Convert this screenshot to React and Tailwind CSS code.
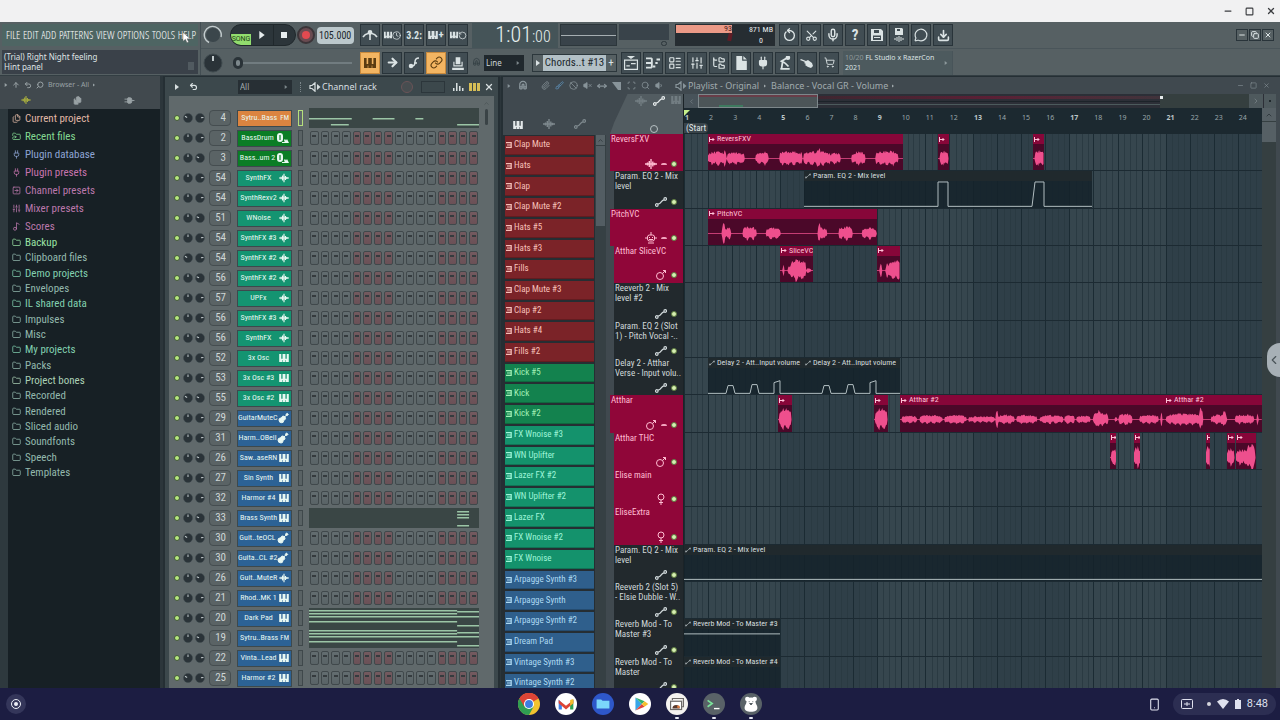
import React from 'react'
import {
  Guitar, Magnet, Mic, Scissors, RotateCcw, Search, Link, MessageCircle, Download, FolderTree,
  Files, Plug, ShoppingCart, VolumeX, Volume1, SlidersVertical, Paperclip, Brush, Ban,
  MoveHorizontal, Scan, Music2, Folder, FolderSymlink, Undo2, ArrowUp, ArrowRight, X, Smartphone,
  Clock, ChevronUp, ChevronRight, ChevronLeft, LayoutList, SquareArrowRight, Hand, Minus, Square, Copy,
} from 'lucide-react'

const BROWSER_TOP = [
  ['Current project', Files, 'text-[#e0b8a6]'],
  ['Recent files', FolderSymlink, 'text-[#84d992]'],
  ['Plugin database', Plug, 'text-[#8ea4d4]'],
  ['Plugin presets', Plug, 'text-[#c774ae]'],
  ['Channel presets', SquareArrowRight, 'text-[#bb78ac]'],
  ['Mixer presets', SlidersVertical, 'text-[#bb78ac]'],
  ['Scores', Music2, 'text-[#bb78ac]'],
]

const BROWSER_FOLDERS = [
  ['Backup', 'text-[#99e0a4]'],
  ['Clipboard files', 'text-[#93b8ad]'],
  ['Demo projects', 'text-[#82d0b0]'],
  ['Envelopes', 'text-[#93b8ad]'],
  ['IL shared data', 'text-[#82d0b0]'],
  ['Impulses', 'text-[#93b8ad]'],
  ['Misc', 'text-[#93b8ad]'],
  ['My projects', 'text-[#82d0b0]'],
  ['Packs', 'text-[#93b8ad]'],
  ['Project bones', 'text-[#abd0b5]'],
  ['Recorded', 'text-[#93b8ad]'],
  ['Rendered', 'text-[#93b8ad]'],
  ['Sliced audio', 'text-[#93b8ad]'],
  ['Soundfonts', 'text-[#93b8ad]'],
  ['Speech', 'text-[#93b8ad]'],
  ['Templates', 'text-[#93b8ad]'],
]

const ORANGE = 'bg-[#db8440]'
const GREEN = 'bg-[#0b7d25]'
const TEAL = 'bg-[#149471]'
const BLUE = 'bg-[#2c6295]'

// [mixer track, name, icon, colour, notes]; notes are [x, y, width] on a 171 x 20 strip
const CHANNELS = [
  [4, 'Sytru..Bass', 'fm', ORANGE, [[0, 10, 43], [22, 16, 18], [64, 10, 22], [107, 10, 8], [149, 16, 22]]],
  [2, 'BassDrum', 'drum', GREEN],
  [3, 'Bass..um 2', 'drum', GREEN],
  [54, 'SynthFX', 'wave', TEAL],
  [54, 'SynthRexv2', 'wave', TEAL],
  [51, 'WNoise', 'wave', TEAL],
  [54, 'SynthFX #3', 'wave', TEAL],
  [54, 'SynthFX #2', 'wave', TEAL],
  [56, 'SynthFX #2', 'wave', TEAL],
  [57, 'UPFx', 'wave', TEAL],
  [56, 'SynthFX #3', 'wave', TEAL],
  [56, 'SynthFX', 'wave', TEAL],
  [52, '3x Osc', 'piano', TEAL],
  [53, '3x Osc #3', 'piano', TEAL],
  [55, '3x Osc #2', 'piano', TEAL],
  [29, 'GuitarMuteC', 'guitar', BLUE],
  [31, 'Harm..OBell', 'guitar', BLUE],
  [26, 'Saw..aseRN', 'piano', BLUE],
  [27, 'Sin Synth', 'piano', BLUE],
  [32, 'Harmor #4', 'piano', BLUE],
  [33, 'Brass Synth', 'piano', BLUE, [[149, 3, 12], [149, 6, 12], [149, 9, 12], [149, 17, 12]]],
  [30, 'Guit..teOCL', 'guitar', BLUE],
  [30, 'Guita..CL #2', 'guitar', BLUE],
  [26, 'Guit..MuteR', 'wave', BLUE],
  [21, 'Rhod..MK 1', 'piano', BLUE],
  [20, 'Dark Pad', 'piano', BLUE, [[0, 2, 149], [0, 5, 149], [0, 8, 171], [0, 13, 149], [149, 3, 22], [149, 17, 22]]],
  [19, 'Sytru..Brass', 'fm', BLUE, [[0, 2, 149], [0, 5, 149], [0, 8, 171], [0, 13, 149], [149, 4, 22], [149, 17, 22]]],
  [22, 'Vinta..Lead', 'piano', BLUE],
  [25, 'Harmor #2', 'piano', BLUE],
]

const RED_ITEM = 'bg-[#7b2328] text-[#f7c0b9]'
const GREEN_ITEM = 'bg-[#13824e] text-[#a3f0b6]'
const TEAL_ITEM = 'bg-[#14926c] text-[#9ef5d8]'
const BLUE_ITEM = 'bg-[#2f5f8c] text-[#add9f2]'

const PICKER = [
  ['Clap Mute', RED_ITEM], ['Hats', RED_ITEM], ['Clap', RED_ITEM], ['Clap Mute #2', RED_ITEM],
  ['Hats #5', RED_ITEM], ['Hats #3', RED_ITEM], ['Fills', RED_ITEM], ['Clap Mute #3', RED_ITEM],
  ['Clap #2', RED_ITEM], ['Hats #4', RED_ITEM], ['Fills #2', RED_ITEM],
  ['Kick #5', GREEN_ITEM], ['Kick', GREEN_ITEM], ['Kick #2', GREEN_ITEM],
  ['FX Wnoise #3', TEAL_ITEM], ['WN Uplifter', TEAL_ITEM], ['Lazer FX #2', TEAL_ITEM],
  ['WN Uplifter #2', TEAL_ITEM], ['Lazer FX', TEAL_ITEM], ['FX Wnoise #2', TEAL_ITEM], ['FX Wnoise', TEAL_ITEM],
  ['Arpagge Synth #3', BLUE_ITEM], ['Arpagge Synth', BLUE_ITEM], ['Arpagge Synth #2', BLUE_ITEM],
  ['Dream Pad', BLUE_ITEM], ['Vintage Synth #3', BLUE_ITEM], ['Vintage Synth #2', BLUE_ITEM],
]

// Width of the visible timeline in song units (24 bars)
const SPAN = 578

const TRACKS = [
  {
    name: 'ReversFXV', kind: 'audio', icon: 'wave', parent: true,
    clips: [
      { x: 24, w: 195, label: 'ReversFXV', wave: [[0, 18, 0.7], [16, 18, 1], [19, 36, 0.65], [48, 60, 0.7], [72, 94, 0.8], [96, 122, 0.8], [110, 113, 1], [122, 132, 0.6], [144, 157, 0.7], [168, 190, 0.8]] },
      { x: 254, w: 11, wave: [[2, 10, 0.75]] },
      { x: 349, w: 11, wave: [[2, 11, 0.8]] },
    ],
  },
  {
    name: 'Param. EQ 2 - Mix\nlevel', kind: 'auto',
    clips: [{ x: 120, w: 288, label: 'Param. EQ 2 - Mix level', line: '0,26 134,26 134,1 144,1 144,26 228,26 231,1 240,1 240,26 288,26' }],
  },
  {
    name: 'PitchVC', kind: 'audio', icon: 'robot', parent: true,
    clips: [{ x: 24, w: 169, label: 'PitchVC', wave: [[14, 17, 1], [14, 23, 0.6], [35, 48, 0.7], [58, 72, 0.6], [110, 113, 1], [110, 119, 0.6], [131, 144, 0.7], [154, 168, 0.6]] }],
  },
  {
    name: 'Atthar SliceVC', kind: 'audio', icon: 'male',
    clips: [
      { x: 96, w: 33, label: 'SliceVC', wave: [[3, 4, 0.7], [8, 11, 0.5], [11, 26, 1.1], [27, 31, 0.25]] },
      { x: 193, w: 23, wave: [[3, 5, 0.8], [9, 12, 0.7], [12, 23, 1.1]] },
    ],
  },
  { name: 'Reeverb 2 - Mix\nlevel #2', kind: 'auto', clips: [] },
  { name: 'Param. EQ 2 (Slot\n1) - Pitch Vocal -..', kind: 'auto', clips: [] },
  {
    name: 'Delay 2 - Atthar\nVerse - Input volu..', kind: 'auto',
    clips: [
      { x: 24, w: 96, label: 'Delay 2 - Att..Input volume', line: '0,26 18,26 20,18 25,18 27,26 42,26 44,17 49,17 51,26 66,26 66,15 72,13 72,26 96,26' },
      { x: 120, w: 96, label: 'Delay 2 - Att..Input volume', line: '0,26 18,26 20,18 25,18 27,26 42,26 44,17 49,17 51,26 66,26 66,15 72,13 72,26 96,26' },
    ],
  },
  {
    name: 'Atthar', kind: 'audio', icon: 'male', parent: true,
    clips: [
      { x: 94, w: 14, wave: [[1, 13, 1.1]] },
      { x: 190, w: 14, wave: [[1, 13, 1.1]] },
      { x: 216, w: 265, label: 'Atthar #2', wave: [[2, 17, 0.4], [20, 42, 0.45], [45, 66, 0.45], [69, 95, 0.35], [96, 98, 1], [98, 114, 0.5], [117, 137, 0.45], [140, 163, 0.45], [165, 174, 0.5], [177, 190, 0.4], [193, 208, 0.7], [198, 200, 1], [215, 217, 0.3], [219, 232, 0.6], [240, 258, 0.5], [261, 262, 0.8]] },
      { x: 481, w: 97, label: 'Atthar #2', wave: [[1, 38, 0.6], [34, 38, 1.2], [46, 62, 0.5], [58, 61, 1], [70, 89, 0.5], [92, 93, 0.8]] },
    ],
  },
  {
    name: 'Atthar THC', kind: 'audio', icon: 'male',
    clips: [
      { x: 426, w: 6, wave: [[1, 6, 0.9]] },
      { x: 450, w: 6, wave: [[0, 6, 1.1]] },
      { x: 522, w: 4, wave: [[0, 4, 1.2]] },
      { x: 543, w: 8, wave: [[0, 7, 0.9]] },
      { x: 552, w: 20, wave: [[0, 11, 0.8], [11, 19, 1.3]] },
    ],
  },
  { name: 'Elise main', kind: 'audio', icon: 'female', clips: [] },
  { name: 'EliseExtra', kind: 'audio', icon: 'female', clips: [] },
  {
    name: 'Param. EQ 2 - Mix\nlevel', kind: 'auto',
    clips: [{ x: 0, w: 578, label: 'Param. EQ 2 - Mix level', line: '0,25 578,25' }],
  },
  { name: 'Reeverb 2 (Slot 5)\n- Elsie Dubble - W..', kind: 'auto', clips: [] },
  {
    name: 'Reverb Mod - To\nMaster #3', kind: 'auto',
    clips: [{ x: 0, w: 96, label: 'Reverb Mod - To Master #3', line: '0,5 96,5' }],
  },
  {
    name: 'Reverb Mod - To\nMaster', kind: 'auto',
    clips: [{ x: 0, w: 96, label: 'Reverb Mod - To Master #4', line: '0,40 96,40' }],
  },
]

// ── Glyphs ───────────────────────────────────────────────────────────────────

function PianoIcon({ className = 'h-2.5 w-2.5' }) {
  return (
    <svg viewBox="0 0 12 10" className={className} fill="currentColor" aria-hidden="true">
      <path d="M0 0h2.600v6h1.600V0h3.600v6h1.600V0H12v10H8.300V7.500h-.6V10H4.300V7.500h-.6V10H0z" />
    </svg>
  )
}

function WaveIcon({ className = 'h-2.5 w-2.5' }) {
  return (
    <svg viewBox="0 0 12 10" className={className} stroke="currentColor" strokeWidth="1.400" aria-hidden="true">
      <path d="M0 5h12M2.500 3.500v3M4.300 2v6M6 0v10M7.800 2.500v5M9.500 3.800v2.400" />
    </svg>
  )
}

function AutoIcon({ className = 'h-2.5 w-2.5' }) {
  return (
    <svg viewBox="0 0 12 10" className={className} fill="none" stroke="currentColor" strokeWidth="1.200" aria-hidden="true">
      <circle cx="1.800" cy="8" r="1.300" />
      <circle cx="10.200" cy="2" r="1.300" />
      <path d="M3 7.200L5 6.200 7.500 3.600 9 2.800" />
    </svg>
  )
}

function DrumIcon() {
  return (
    <svg viewBox="0 0 12 10" className="h-2.5 w-3" fill="currentColor" aria-hidden="true">
      <path d="M3 0a3 3 0 0 1 3 3v3a3 3 0 0 1-6 0V3a3 3 0 0 1 3-3zM2.400 2v5h1.200V2z" fillRule="evenodd" />
      <path d="M7 7l1-1 1 1.500L10 6l2 4H8z" />
      <path d="M5 9h4v1H5z" />
    </svg>
  )
}

function ChannelIcon({ type }) {
  if (type === 'piano') return <PianoIcon className="h-2 w-2.5" />
  if (type === 'wave') return <WaveIcon />
  if (type === 'drum') return <DrumIcon />
  if (type === 'guitar') return <Guitar className="h-3 w-3" fill="currentColor" />
  return <span className="text-[7px]">FM</span>
}

function TrackIcon({ type }) {
  if (type === 'wave') return <WaveIcon className="h-2.5 w-3" />
  if (type === 'robot') {
    return (
      <svg viewBox="0 0 12 12" className="h-3 w-3" fill="none" stroke="currentColor" aria-hidden="true">
        <rect x="2.500" y="3" width="7" height="6" rx="2" />
        <path d="M6 0v3M0 6h2M10 6h2M4 5.500h1M7 5.500h1M4 7.500h4M3 11h6" />
      </svg>
    )
  }
  if (type === 'male') {
    return (
      <svg viewBox="0 0 12 12" className="h-3 w-3" fill="none" stroke="currentColor" aria-hidden="true">
        <circle cx="5" cy="7" r="3.500" />
        <path d="M7.500 4.500l3-3M8 1.500h2.500V4" />
      </svg>
    )
  }
  if (type === 'female') {
    return (
      <svg viewBox="0 0 12 12" className="h-3 w-3" fill="none" stroke="currentColor" aria-hidden="true">
        <circle cx="6" cy="4" r="3" />
        <path d="M6 7v5M4 9.500h4" />
      </svg>
    )
  }
  return <AutoIcon className="h-2.5 w-3" />
}

function SpeakerIcon() {
  return (
    <svg viewBox="0 0 12 10" className="h-2.5 w-3" fill="none" stroke="currentColor" strokeWidth="1.200" aria-hidden="true">
      <path d="M1 3.500h2L6 .8v8.400L3 6.500H1z" />
      <path d="M8 2l3.500 3L8 8z" fill="currentColor" stroke="none" />
    </svg>
  )
}

function Play({ className = 'h-1.5 w-1' }) {
  return (
    <svg viewBox="0 0 4 6" className={className} fill="currentColor" aria-hidden="true">
      <path d="M0 0l4 3-4 3z" />
    </svg>
  )
}

function Knob({ className, angle = 0 }) {
  return (
    <svg viewBox="0 0 20 20" className={className} aria-hidden="true">
      <circle cx="10" cy="10" r="9" fill="#2a3338" stroke="#3f4a4f" strokeWidth="1" />
      <path d="M10 3v5" stroke="#c2cbcd" strokeWidth="2" transform={`rotate(${angle} 10 10)`} />
    </svg>
  )
}

// ── Toolbar ──────────────────────────────────────────────────────────────────

function ToolButton({ label, active, children }) {
  return (
    <button
      aria-label={label}
      className={`grid h-[22px] w-5 shrink-0 place-items-center border ${
        active ? 'border-[#c98a3c] bg-[#f3b562] text-[#5c3c10]' : 'border-[#29343a] bg-[#414d53] text-[#dbe3e4]'
      }`}
    >
      {children}
    </button>
  )
}

function MenuPanel() {
  return (
    <div className="flex w-[198px] shrink-0 flex-col gap-1 pt-0.5 pl-0.5">
      <nav className="flex h-[22px] items-center justify-between bg-[#4e6563] pr-0.5 pl-1 font-['Open_Sans_Condensed_Light','OpenSans-CondensedLight','Roboto_Condensed',sans-serif] text-[11px] font-light text-white">
        {['FILE', 'EDIT', 'ADD', 'PATTERNS', 'VIEW', 'OPTIONS', 'TOOLS', 'HELP'].map(m => (
          <button key={m}>{m}</button>
        ))}
      </nav>
      <div className="relative h-6 bg-[#3a4149] pt-0.5 pl-0.5 font-['Noto_Sans',sans-serif] text-[8px] leading-[10px] text-[#dfe4e6]">
        <p>(Trial) Right Night feeling</p>
        <p>Hint panel</p>
        <span className="absolute right-1 bottom-1 h-2 w-1.5 bg-[#515a60]" />
      </div>
    </div>
  )
}

function TransportRow() {
  return (
    <div className="flex h-[27px] items-center border-b border-[#4a555a] pr-1.5 pl-0.5">
      <svg viewBox="0 0 20 20" className="h-5 w-5 shrink-0" aria-hidden="true">
        <circle cx="10" cy="10" r="7" fill="#3b464b" />
        <path d="M6 17.500A8.500 8.500 0 1 1 18 12" fill="none" stroke="#c3ccce" strokeWidth="1.400" />
      </svg>
      <div className="ml-[7px] flex h-[22px] w-[66px] shrink-0 overflow-hidden rounded-full border border-[#20282c] bg-[#2c353a] text-[#e7edee]">
        <button className="mt-auto h-[11px] w-5 bg-[#92dd6e] font-['Roboto',sans-serif] text-[7px] leading-[11px] text-[#1f4416]">SONG</button>
        <button aria-label="Play" className="grid flex-1 place-items-center"><Play className="h-2 w-1.5" /></button>
        <button aria-label="Stop" className="grid flex-1 place-items-center border-l border-[#20282c]">
          <span className="h-1.5 w-1.5 bg-[#e7edee]" />
        </button>
      </div>
      <button aria-label="Record" className="ml-px grid h-[18px] w-[18px] shrink-0 place-items-center rounded-full border-2 border-[#3b3438] bg-[#6a4b51]">
        <span className="h-2 w-2 rounded-sm bg-[#e24a50]" />
      </button>
      <input aria-label="Tempo" defaultValue="105.000" className="ml-0.5 h-[17px] w-[37px] shrink-0 rounded-sm bg-[#bcc8cc] px-0.5 text-[10px] text-[#20282d]" />
      <div className="ml-1.5 flex shrink-0 gap-0.5">
        <ToolButton label="Metronome">
          <svg viewBox="0 0 16 12" className="h-3 w-4" fill="none" stroke="currentColor" strokeWidth="1.600"><path d="M1 8q2-3 5-3.500M15 8q-2-3-5-3.500M8 5v6" /><circle cx="8" cy="3.500" r="1.600" fill="currentColor" /></svg>
        </ToolButton>
        <ToolButton label="Wait for input"><span className="flex items-center"><PianoIcon className="h-2 w-2" /><Clock size={9} /></span></ToolButton>
        <ToolButton label="Countdown"><span className="text-[10px] font-bold">3.2:</span></ToolButton>
        <ToolButton label="Overdub"><span className="flex items-center text-[11px] leading-3 font-bold"><PianoIcon className="h-2 w-2.5" />+</span></ToolButton>
        <ToolButton label="Loop record"><span className="flex items-center"><PianoIcon className="h-2 w-2" /><RotateCcw size={9} /></span></ToolButton>
      </div>
      <div className="ml-1 flex h-[25px] w-[86px] shrink-0 items-center justify-center bg-[#455458] pl-4 font-light text-[#e8f1f1]">
        <span className="text-[22px] leading-6">1:01</span>
        <span className="mt-1 text-[16px] leading-5">:00</span>
      </div>
      <div className="ml-0.5 flex h-[22px] w-[57px] shrink-0 items-center border border-[#2c363b] bg-[#39434a]">
        <span className="h-px w-full bg-[#a6aeb2]" />
      </div>
      <div className="ml-0.5 flex h-[22px] w-[50px] shrink-0 flex-col">
        <div className="h-4 bg-[#39434a]" />
        <span className="mt-px mr-0.5 ml-auto h-[5px] w-[6px] rounded-full border border-[#2c363b]" />
      </div>
      <div className="ml-1.5 flex h-[22px] w-[100px] shrink-0 justify-between bg-[#262d32] text-[8px] leading-[11px] text-[#e6ecec]">
        <div className="flex flex-col">
          <div className="mt-px ml-px flex h-2 w-14 justify-end bg-[#ec9a87] leading-2 text-[#4f1d1b]">93</div>
          <span className="ml-auto h-2 w-1 rotate-12 bg-[#611c26]" />
        </div>
        <div className="flex flex-col items-end pr-0.5">
          <span>871 MB</span>
          <span className="pr-2.5">0</span>
        </div>
      </div>
      <div className="ml-1 flex shrink-0 gap-0.5">
        <ToolButton label="Undo"><RotateCcw size={13} strokeWidth={2.5} className="rotate-45" /></ToolButton>
        <ToolButton label="Cut"><Scissors size={13} className="-rotate-90" /></ToolButton>
        <ToolButton label="Record audio"><Mic size={14} strokeWidth={2.5} /></ToolButton>
        <ToolButton label="Help"><span className="text-[15px] leading-4 font-bold">?</span></ToolButton>
        <ToolButton label="Save">
          <svg viewBox="0 0 12 12" className="h-3 w-3" fill="currentColor" fillRule="evenodd"><path d="M0 0h10l2 2v10H0zM3 1v3h5V1zM2 6.500V11h8V6.500z" /><path d="M3 8h6v1H3z" /></svg>
        </ToolButton>
        <ToolButton label="Save new version">
          <svg viewBox="0 0 12 14" className="h-3.5 w-3" fill="currentColor" fillRule="evenodd"><path d="M2 0h7l1 1v6H2zM4 1v2h3V1z" /><path d="M1 10.500h10v1H1zM5.500 8h1v6h-1zM3.500 9h1v4h-1zM7.500 9h1v4h-1z" /></svg>
        </ToolButton>
        <ToolButton label="About"><MessageCircle size={14} /></ToolButton>
        <ToolButton label="Download"><Download size={13} strokeWidth={3} /></ToolButton>
      </div>
      <div className="ml-auto flex gap-px text-[#dbe3e4]">
        <button aria-label="Minimize project" className="grid h-3 w-3 place-items-center border border-[#29343a]"><Minus size={8} strokeWidth={3} /></button>
        <button aria-label="Restore project" className="grid h-3 w-3 place-items-center border border-[#29343a]"><Copy size={8} strokeWidth={3} /></button>
        <button aria-label="Close project" className="grid h-3 w-3 place-items-center border border-[#29343a]"><X size={8} strokeWidth={3} /></button>
      </div>
    </div>
  )
}

function PatternRow() {
  return (
    <div className="flex h-[27px] items-center pl-0.5">
      <Knob className="h-5 w-5 shrink-0" />
      <input
        type="range"
        aria-label="Main pitch"
        defaultValue={0}
        className="ml-2.5 h-0.5 w-[119px] shrink-0 appearance-none bg-[#717c80] [&::-webkit-slider-thumb]:h-3 [&::-webkit-slider-thumb]:w-2.5 [&::-webkit-slider-thumb]:appearance-none [&::-webkit-slider-thumb]:rounded-full [&::-webkit-slider-thumb]:border-3 [&::-webkit-slider-thumb]:border-[#2a3338] [&::-webkit-slider-thumb]:bg-[#7d888c]"
      />
      <div className="ml-2 flex shrink-0 gap-0.5">
        <ToolButton label="Typing keyboard" active><PianoIcon className="h-2.5 w-3.5" /></ToolButton>
        <ToolButton label="Step edit"><ArrowRight size={13} strokeWidth={4} /></ToolButton>
        <ToolButton label="Note slide">
          <svg viewBox="0 0 12 12" className="h-3 w-3" fill="none" stroke="currentColor" strokeWidth="1.500"><circle cx="3" cy="9" r="1.500" fill="currentColor" /><path d="M4 9q3 0 3-4t4-4M6 6h3" /></svg>
        </ToolButton>
        <ToolButton label="Link" active><Link size={13} /></ToolButton>
        <ToolButton label="Multilink">
          <svg viewBox="0 0 12 12" className="h-3.5 w-3.5" fill="currentColor"><path d="M4 1h4v6H4zM2 5h1v3h6V5h1v4H2zM1 10h10v2H1z" /></svg>
        </ToolButton>
      </div>
      <Magnet size={9} className="ml-1 shrink-0 -rotate-45 text-[#333e43]" />
      <label className="ml-[3px] flex shrink-0 items-center bg-[#20282d] pr-1 text-[#7c878b]">
        <span className="sr-only">Snap</span>
        <select className="h-4 w-8 appearance-none pl-0.5 font-['Noto_Sans',sans-serif] text-[8px] leading-3 text-[#ccd4d6]">
          <option>Line</option>
        </select>
        <Play className="h-1 w-1" />
      </label>
      <div className="ml-2 flex h-[18px] shrink-0 border border-[#2c373c] text-[#dce3e5]">
        <button aria-label="Pattern menu" className="grid w-2.5 place-items-center"><Play /></button>
        <button className="w-[63px] bg-[#b3c0c6] text-[11px] leading-4 whitespace-nowrap text-[#20282d]">Chords..t #13</button>
        <button className="w-2.5 text-[11px] leading-4">+</button>
      </div>
      <div className="ml-1 flex shrink-0 gap-0.5">
        <ToolButton label="Playlist">
          <svg viewBox="0 0 12 12" className="h-3.5 w-3.5" fill="none" stroke="currentColor"><path d="M.5 3.500h11v8H.5zM2 8.500h3M6 6.500h4M4 .5h4L6 2z" /></svg>
        </ToolButton>
        <ToolButton label="Piano roll">
          <svg viewBox="0 0 12 12" className="h-3.5 w-3.5" fill="none" stroke="currentColor" strokeWidth="1.600"><path d="M0 2h5M0 6h5M0 10h5M5 2v8M6 9h2M8 6h2M9 3h3" /></svg>
        </ToolButton>
        <ToolButton label="Channel rack"><LayoutList size={14} /></ToolButton>
        <ToolButton label="Mixer"><SlidersVertical size={14} /></ToolButton>
        <ToolButton label="Browser"><FolderTree size={14} /></ToolButton>
        <ToolButton label="Project picker">
          <svg viewBox="0 0 12 12" className="h-3.5 w-3.5" fill="currentColor"><path d="M2 0h5v4h4v8H2zM8 0l3 3H8z" /></svg>
        </ToolButton>
        <ToolButton label="Plugin picker"><Plug size={14} fill="currentColor" className="rotate-180 -scale-y-100" /></ToolButton>
        <ToolButton label="Tempo tapper">
          <svg viewBox="0 0 12 12" className="h-3.5 w-3.5" fill="none" stroke="currentColor" strokeWidth="1.500"><path d="M8 1.500L3 4.500l3 1.500M4 4.500L3 11M6 6l3 3M2 11h8" /><circle cx="8.500" cy="1.500" r="1.200" fill="currentColor" /></svg>
        </ToolButton>
        <ToolButton label="Touch controller">
          <svg viewBox="0 0 14 12" className="h-3 w-3.5" fill="currentColor"><path d="M1 2l5 2 2-1 4 3 1 3-2 2-3-1-3-2 1-1-2-1 1-1-5-2z" /></svg>
        </ToolButton>
        <ToolButton label="Shop"><ShoppingCart size={11} /></ToolButton>
      </div>
      <div className="ml-1 flex h-6 w-[110px] shrink-0 items-center border-r border-[#485459] bg-[#4d5a5e] pl-0.5 font-['Noto_Sans',sans-serif] text-[7px] leading-[10px] text-[#dbe2e3]">
        <p className="flex-1"><span className="text-[#8d999c]">10/20</span> FL Studio x RazerCon<br />2021</p>
        <Play className="mr-1 h-1 w-1 text-[#8d999c]" />
      </div>
    </div>
  )
}

// ── Browser ──────────────────────────────────────────────────────────────────

function Browser() {
  return (
    <aside className="flex w-40 shrink-0 flex-col bg-[#2e393e]">
      <header className="h-[33px] bg-[#41494e] pt-px text-[#99a2a5]">
        <div className="flex h-4 items-center gap-1 pl-1 font-['Noto_Sans',sans-serif] text-[7px]">
          <Play className="h-1 w-1" />
          <ArrowUp size={8} strokeWidth={3} />
          <Undo2 size={8} strokeWidth={3} />
          <Search size={8} strokeWidth={3} className="-scale-x-100" />
          <span>Browser - All</span>
          <Play className="h-1 w-0.5" />
        </div>
        <div className="flex h-[14px] items-center justify-around pr-1">
          <WaveIcon className="h-2 w-2.5 text-[#a5ab3f]" />
          <Files size={9} fill="currentColor" />
          <Plug size={11} fill="currentColor" className="-rotate-90" />
        </div>
      </header>
      <ul className="ml-2 flex-1 overflow-hidden bg-[#172025] pl-1 text-[11px] leading-[15px]">
        {BROWSER_TOP.map(([name, Icon, color]) => (
          <li key={name} className={`flex h-[18px] items-center gap-1 ${color}`}>
            <Icon size={9} />
            <button>{name}</button>
          </li>
        ))}
        <li>
          <ul className="grid h-[245px] grid-rows-[repeat(16,minmax(0,1fr))]">
            {BROWSER_FOLDERS.map(([name, color]) => (
              <li key={name} className={`flex items-center gap-1 ${color}`}>
                <Folder size={9} />
                <button>{name}</button>
              </li>
            ))}
          </ul>
        </li>
      </ul>
    </aside>
  )
}

// ── Channel rack ─────────────────────────────────────────────────────────────

function StepRow({ name }) {
  return (
    <div className="grid h-5 flex-1 grid-cols-16 items-center">
      {Array.from({ length: 16 }, (_, i) => (
        <button
          key={i}
          aria-label={`${name} step ${i + 1}`}
          className={`mx-px flex h-3.5 justify-center rounded-xs border border-[#40484b] pt-[3px] ${
            Math.floor(i / 4) % 2 ? 'bg-linear-to-b from-[#745a5f] to-[#6a5056]' : 'bg-linear-to-b from-[#636d70] to-[#596366]'
          }`}
        >
          <span className="h-0.5 w-1 bg-[#353b3e]" />
        </button>
      ))}
    </div>
  )
}

function NoteStrip({ notes }) {
  return (
    <div className="h-5 flex-1 bg-[#3a4645]">
      <svg viewBox="0 0 171 20" preserveAspectRatio="none" className="h-full w-full" fill="#9bc5a6" aria-hidden="true">
        {notes.map(([x, y, w], i) => <rect key={i} x={x} y={y} width={w} height="1.500" />)}
      </svg>
    </div>
  )
}

function Channel({ index, track, name, icon, color, notes }) {
  return (
    <li className="flex h-5 items-center">
      <button aria-label={`Mute ${name}`} className="h-1.5 w-1.5 rounded-full border border-[#43563c] bg-[#b5e87d]" />
      <Knob className="ml-[3px] h-2.5 w-2.5 shrink-0" angle={index % 7 === 0 ? -60 : 0} />
      <Knob className="ml-0.5 h-2.5 w-2.5 shrink-0" angle={index % 3 === 2 ? -70 : 80} />
      <input aria-label={`${name} mixer track`} defaultValue={track} className="ml-1 h-4 w-[22px] rounded-sm border border-[#454d50] bg-[#5a6365] pr-1 text-right text-[11px] text-[#cdd5d5]" />
      <button className={`ml-1.5 flex h-[17px] w-[55px] shrink-0 items-center border border-[#3d494d] pr-0.5 text-[8px] text-[#e8f8f2] ${color}`}>
        <span className="flex-1 whitespace-nowrap">{name}</span>
        <ChannelIcon type={icon} />
      </button>
      <span className={`ml-1.5 h-4 w-[5px] shrink-0 border ${index === 0 ? 'border-[#b5df7c]' : 'border-[#3f484b] bg-[#596264]'}`} />
      <div className="ml-1.5 flex flex-1">
        {notes ? <NoteStrip notes={notes} /> : <StepRow name={name} />}
      </div>
    </li>
  )
}

function ChannelRack() {
  return (
    <section className="ml-[3px] flex w-[337px] shrink-0 flex-col border-x-2 border-t border-[#252f34] bg-[#3c484c] px-1">
      <header className="flex h-[19px] shrink-0 items-center pl-1.5 text-[#d8dfe0]">
        <Play />
        <Undo2 size={9} strokeWidth={3} className="ml-2.5" />
        <label className="ml-10 flex items-center bg-[#272f34] pr-1 text-[#7c878b]">
          <span className="sr-only">Channel filter</span>
          <select className="h-3.5 w-[46px] appearance-none pl-0.5 font-['Noto_Sans',sans-serif] text-[8px] leading-3 text-[#a4adaf]">
            <option>All</option>
          </select>
          <Play className="h-1 w-1" />
        </label>
        <span className="ml-2 h-2.5 border-l border-dotted border-[#7c878b]" />
        <div className="ml-2"><SpeakerIcon /></div>
        <h2 className="ml-px font-['Noto_Sans',sans-serif] text-[9px] whitespace-nowrap">Channel rack</h2>
        <span className="ml-auto h-3 w-3 rounded-full border border-[#6a5357] bg-[#474d50]" />
        <span className="ml-2 h-3 w-6 border border-[#2c363b]" />
        <svg viewBox="0 0 12 8" className="ml-2 h-2 w-3" fill="currentColor" aria-hidden="true">
          <path d="M0 5h1.500v3H0zM3 0h1.500v8H3zM6 3h1.500v5H6zM9 5h1.500v3H9z" />
        </svg>
        <span className="ml-1 flex gap-px">
          <i className="h-2 w-[3px] bg-[#d5bd56]" /><i className="h-2 w-[3px] bg-[#d5bd56]" /><i className="h-2 w-[3px] bg-[#d5bd56]" />
        </span>
        <button aria-label="Close channel rack" className="ml-1"><X size={10} strokeWidth={3} /></button>
      </header>
      <div className="flex min-h-0 flex-1 overflow-hidden bg-[#60696b]">
        <ul className="flex-1 pt-3 pl-[5px]">
          {CHANNELS.map(([track, name, icon, color, notes], i) => (
            <Channel key={i} index={i} track={track} name={name} icon={icon} color={color} notes={notes} />
          ))}
        </ul>
        <div className="flex w-[15px] flex-col items-center pt-1 text-[#444d50]">
          <ChevronUp size={7} />
          <span className="mt-0.5 h-4 w-[3px] rounded bg-[#3a4346]" />
        </div>
      </div>
    </section>
  )
}

// ── Playlist ─────────────────────────────────────────────────────────────────

function wavePoints(w, segments) {
  const top = []
  const bottom = []
  for (let x = 0; x <= w; x += 0.75) {
    let amp = 0.04
    segments.forEach(([a, b, peak]) => {
      if (x < a || x > b) return
      const t = (x - a) / (b - a)
      const body = Math.min(1, 0.7 + Math.sin(t * Math.PI) * 0.4)
      const noise = Math.abs(Math.sin(x * 12.9 + a * 3.1) * 43758) % 1
      amp = Math.max(amp, peak * body * (0.6 + 0.4 * noise))
    })
    const skew = 0.8 + 0.2 * Math.sin(x * 7.3)
    top.push(`${x},${15 - amp * 11}`)
    bottom.unshift(`${x},${15 + amp * 11 * skew}`)
  }
  return [...top, ...bottom].join(' ')
}

function Clip({ clip, kind }) {
  const audio = kind === 'audio'
  return (
    <div
      className={`absolute inset-y-0 flex flex-col overflow-hidden ${audio ? 'bg-[#4b0829]' : 'bg-[#14222a]/85'}`}
      style={{ left: `${(clip.x / SPAN) * 100}%`, width: `${(clip.w / SPAN) * 100}%` }}
    >
      <div className={`flex h-2.5 shrink-0 items-center gap-0.5 pl-px text-[8px] leading-[10px] whitespace-nowrap ${audio ? 'bg-[#870639] text-[#ffc2d8]' : 'bg-[#20292d] text-[#d3dcde]'}`}>
        {audio ? (
          <svg viewBox="0 0 6 5" className="h-[5px] w-1.5 shrink-0" fill="none" stroke="currentColor" aria-hidden="true"><path d="M.5 0v5M1 2.500h4M3.500 1L5 2.500 3.500 4" /></svg>
        ) : (
          <AutoIcon className="h-1.5 w-1.5 shrink-0" />
        )}
        {clip.label}
      </div>
      <svg viewBox={`0 0 ${clip.w} 27`} preserveAspectRatio="none" className="min-h-0 w-full flex-1" aria-hidden="true">
        {audio
          ? <polygon points={wavePoints(clip.w, clip.wave)} fill="#ee4f8d" />
          : <polyline points={clip.line} fill="none" stroke="#b3bfc2" strokeWidth="1" />}
      </svg>
    </div>
  )
}

function TrackHead({ track }) {
  const audio = track.kind === 'audio'
  return (
    <div className={`flex min-h-0 flex-col justify-between overflow-hidden pb-0.5 pl-px text-[9px] leading-[10px] ${track.parent ? '' : 'ml-1'} ${audio ? 'bg-[#900639] text-[#ffbdd2]' : 'bg-[#22292d] text-[#d0d8da]'}`}>
      <span className="shrink-0 whitespace-pre">{track.name}</span>
      <span className="-mt-1 flex items-center justify-end gap-1 pr-1.5">
        <TrackIcon type={track.icon} />
        {track.parent && <span className="h-0.5 w-1.5 rounded-t-full bg-[#f1a3bd]" />}
        <button aria-label={`Mute track ${track.name}`} className="h-1.5 w-1.5 rounded-full border border-[#5c7a3e] bg-[#d7efb2]" />
      </span>
    </div>
  )
}

function PlaylistToolbar() {
  return (
    <header className="flex h-4 shrink-0 items-center gap-[5px] pt-px pr-1.5 pl-1 text-[#88949a]">
      <Play className="h-1 w-1" />
      <Magnet size={10} strokeWidth={3} className="mr-2 ml-0.5 -rotate-45" />
      <Paperclip size={9} />
      <Brush size={9} className="text-[#5d8fb5]" />
      <Ban size={9} />
      <VolumeX size={9} fill="currentColor" />
      <MoveHorizontal size={10} strokeWidth={3} />
      <svg viewBox="0 0 10 8" className="h-2 w-2.5" fill="currentColor" aria-hidden="true"><path d="M0 0h9v8H6z" /></svg>
      <Scan size={9} />
      <Search size={9} />
      <Volume1 size={9} fill="currentColor" />
      <span className="ml-1.5"><SpeakerIcon /></span>
      <h2 className="-ml-1 flex items-center gap-1 font-['Noto_Sans',sans-serif] text-[9px] text-[#a1abae]">
        Playlist - Original <Play className="mx-px h-1 w-0.5" /> Balance - Vocal GR - Volume <Play className="h-1 w-0.5" />
      </h2>
      <div className="ml-auto flex gap-1.5">
        <button aria-label="Minimize playlist"><Minus size={7} /></button>
        <button aria-label="Maximize playlist"><Square size={7} /></button>
        <button aria-label="Close playlist"><X size={7} /></button>
      </div>
    </header>
  )
}

function Picker() {
  return (
    <div className="flex w-[103px] shrink-0 flex-col">
      <div className="flex h-[41px] shrink-0 items-end justify-between pr-5 pb-1.5 pl-2.5 text-[#7d888d]">
        <PianoIcon className="h-2 w-2.5 text-[#e3e8e9]" />
        <WaveIcon className="h-2.5 w-3" />
        <AutoIcon className="h-2.5 w-3" />
      </div>
      <div className="flex min-h-0 flex-1 overflow-hidden">
        <ul className="grid h-[560px] flex-1 grid-rows-[repeat(27,minmax(0,1fr))] bg-[#262e33] pt-px pr-px pl-0.5 text-[9px]">
          {PICKER.map(([name, color]) => (
            <li key={name} className={`mb-0.5 flex items-center gap-0.5 border-b border-black/20 pl-px ${color}`}>
              <svg viewBox="0 0 6 6" className="h-1.5 w-1.5 shrink-0" fill="none" stroke="currentColor" strokeWidth="1.200" aria-hidden="true"><path d="M0 .6h5.200v4.800H0M1 3h4" /></svg>
              <button className="whitespace-nowrap">{name}</button>
            </li>
          ))}
        </ul>
        <div className="flex w-[11px] flex-col bg-[#364044] px-px text-[#1f282c]">
          <span className="grid h-2.5 place-items-center bg-[#586267]"><ChevronUp size={7} /></span>
          <span className="mt-px h-20 bg-[#535d63]" />
        </div>
      </div>
    </div>
  )
}

function TrackHeads() {
  return (
    <div className="ml-1 flex w-[74px] shrink-0 flex-col border-r border-[#1b2327]">
      <div className="flex h-10 shrink-0 flex-col justify-between bg-[#525c61] pt-0.5 pb-px text-[#8e999d] [clip-path:polygon(24%_0,100%_0,100%_100%,0_100%,6%_70%)]">
        <div className="flex justify-end gap-1.5 pr-0.5">
          <WaveIcon className="h-2.5 w-3 text-[#727d82]" />
          <AutoIcon className="h-2.5 w-3 text-[#e3e8e9]" />
          <PianoIcon className="h-2 w-2.5 text-[#727d82]" />
        </div>
        <span className="ml-10 h-2 w-2 rounded-full border border-[#b8c1c4]" />
      </div>
      <div className="min-h-0 flex-1 overflow-hidden">
        <div className="grid h-[560px] grid-rows-[repeat(15,minmax(0,1fr))]">
          {TRACKS.map((t, i) => <TrackHead key={i} track={t} />)}
        </div>
      </div>
    </div>
  )
}

function Overview() {
  return (
    <div className="flex h-3.5 shrink-0 bg-[#2c2f37] text-[#808b90]">
      <span className="grid w-3.5 place-items-center bg-[#48535a]"><ChevronLeft size={7} /></span>
      <div className="flex w-[120px] flex-col justify-between border border-[#7d878b] bg-[#4c5558]">
        <span className="h-0.5 bg-[#693d48]" />
        <span className="ml-5 h-0.5 w-6 bg-[#3e7a5f]" />
      </div>
      <div className="flex w-[342px] flex-col gap-0.5 pt-0.5">
        <span className="h-[3px] bg-linear-to-r from-[#3e2630] via-[#5b1f35] to-[#40333b]" />
        <span className="h-px bg-[#1c2329]" />
        <span className="h-px bg-[#4c5a5c]" />
      </div>
      <span className="flex-1 bg-[#353f3f]"><i className="mt-0.5 block h-[3px] w-[3px] bg-[#e6eaeb]" /></span>
      <span className="grid w-3.5 place-items-center bg-[#4e595d]"><ChevronRight size={8} /></span>
      <span className="ml-px grid w-3 place-items-center bg-[#4e595d]"><i className="h-0.5 w-0.5 bg-[#1f282c]" /></span>
    </div>
  )
}

function Timeline() {
  return (
    <div className="flex min-w-0 flex-1 flex-col">
      <Overview />
      <div className="flex min-h-0 flex-1">
        <div className="flex min-w-0 flex-1 flex-col overflow-hidden">
          <div className="relative h-[26px] shrink-0 bg-[#1c2930]">
            <div className="flex h-5 items-center font-['Noto_Sans',sans-serif] text-[7px] leading-2 text-[#9aa6aa]">
              {Array.from({ length: 24 }, (_, i) => (
                <span key={i} className={`w-0 flex-1 pl-px ${i % 4 === 0 ? 'font-bold text-[#bcc6c8]' : ''}`}>{i + 1}</span>
              ))}
            </div>
            <span className="absolute top-0.5 left-0 h-1.5 w-1.5 bg-[#c6f08b] [clip-path:polygon(0_0,100%_0,0_100%)]" />
            <span className="absolute bottom-px left-0 h-2.5 w-6 rounded-r bg-[#39444a] pl-0.5 text-[9px] leading-[10px] text-[#e0e7e9]">(Start</span>
          </div>
          <div className="relative min-h-0 flex-1 overflow-hidden">
            <div className="absolute inset-0 grid grid-cols-[repeat(24,minmax(0,1fr))]">
              {Array.from({ length: 24 }, (_, i) => (
                <div key={i} className={`grid grid-cols-4 border-l border-[#1b2b33] ${Math.floor(i / 4) % 2 ? 'bg-[#2f3f48]' : 'bg-[#36464e]'}`}>
                  <i />
                  <i className="border-l border-[#2a3a42]" />
                  <i className="border-l border-[#2a3a42]" />
                  <i className="border-l border-[#2a3a42]" />
                </div>
              ))}
            </div>
            <div className="relative grid h-[560px] grid-rows-[repeat(15,minmax(0,1fr))]">
              {TRACKS.map((t, i) => (
                <div key={i} className="relative border-b border-[#1c2a32]">
                  {t.clips.map(c => <Clip key={c.x} clip={c} kind={t.kind} />)}
                </div>
              ))}
            </div>
          </div>
        </div>
        <div className="w-3.5 shrink-0 bg-[#353f41] text-[#20292d]">
          <span className="grid h-3.5 place-items-center border-b border-[#353f41] bg-[#566065]"><ChevronUp size={8} /></span>
          <span className="block h-5 bg-[#566065]" />
        </div>
      </div>
    </div>
  )
}

function Playlist() {
  return (
    <section className="ml-px flex min-w-0 flex-1 flex-col border-t border-l-2 border-[#252f34] bg-[#40494f] pr-1">
      <PlaylistToolbar />
      <div className="flex min-h-0 flex-1 pt-px">
        <Picker />
        <TrackHeads />
        <Timeline />
      </div>
    </section>
  )
}

// ── Shelf ────────────────────────────────────────────────────────────────────

const APPS = [
  ['Chrome', (
    <>
      <circle cx="12" cy="12" r="12" fill="#f2c230" />
      <path d="M12 12L1.600 6A12 12 0 0 1 22.400 6z" fill="#dd4436" />
      <path d="M12 12L1.600 6A12 12 0 0 0 12 24l5-9z" fill="#2f9e52" />
      <path d="M12 6h10.400A12 12 0 0 0 1.600 6L7 15z" fill="#dd4436" />
      <circle cx="12" cy="12" r="5.500" fill="#fff" />
      <circle cx="12" cy="12" r="4.300" fill="#3e7de0" />
    </>
  )],
  ['Gmail', (
    <>
      <circle cx="12" cy="12" r="12" fill="#fff" />
      <path d="M4 7v11h3.500V11z" fill="#3f7fe8" />
      <path d="M20 7v11h-3.500V11z" fill="#2fa251" />
      <path d="M4 7.500l8 6.500 8-6.500v3.800L12 18l-8-6.700z" fill="#dd4436" />
      <path d="M16.500 7.500L20 6.500v4.800l-3.500 2.700z" fill="#f2bd2c" />
    </>
  )],
  ['Files', (
    <>
      <circle cx="12" cy="12" r="12" fill="#2e57c9" />
      <path d="M5 7h5l1.500 1.500H19V17H5z" fill="#7bd6fb" />
    </>
  )],
  ['Play Store', (
    <>
      <circle cx="12" cy="12" r="12" fill="#fff" />
      <path d="M7 5v14l7-7z" fill="#38a6e8" />
      <path d="M7 5l7 7 3-3z" fill="#33b16a" />
      <path d="M7 19l7-7 3 3z" fill="#e0453c" />
      <path d="M17 9l4 3-4 3-3-3z" fill="#f4bf2e" />
    </>
  )],
  ['Gallery', (
    <>
      <circle cx="12" cy="12" r="12" fill="#f4f2ef" />
      <path d="M7 8V6h12v9h-2" fill="none" stroke="#6d6a68" strokeWidth="1.300" />
      <rect x="5" y="9" width="12" height="9" fill="#fff" stroke="#6d6a68" strokeWidth="1.300" />
      <path d="M7 17a4 4 0 0 1 8 0z" fill="#5a3b2e" />
      <circle cx="13.500" cy="15" r="1.500" fill="#e07a3c" />
    </>
  ), true],
  ['Terminal', (
    <>
      <circle cx="12" cy="12" r="12" fill="#596267" />
      <path d="M5 8l5 3.500L5 15" fill="none" stroke="#7be39b" strokeWidth="1.800" />
      <path d="M12 17h6" stroke="#fff" strokeWidth="1.500" />
    </>
  ), true],
  ['Linux', (
    <>
      <circle cx="12" cy="12" r="12" fill="#596267" />
      <circle cx="8" cy="6.500" r="2.500" fill="#fff" />
      <circle cx="16" cy="6.500" r="2.500" fill="#fff" />
      <path d="M12 5c3.500 0 5 2 5 5 0 2 2 3 2 6 0 3-2.500 4.500-7 4.500S5 19 5 16c0-3 2-4 2-6 0-3 1.500-5 5-5z" fill="#fff" />
      <path d="M9.500 9.500h1M13.500 9.500h1M10.500 11.500L12 13l1.500-1.500z" stroke="#4a5358" fill="#4a5358" />
    </>
  ), true],
]

function Shelf() {
  return (
    <footer className="grid h-8 shrink-0 grid-cols-[1fr_auto_1fr] items-center bg-[#1c1d42] text-[#dfe1ee]">
      <button aria-label="Launcher" className="ml-1.5 grid h-5 w-5 place-items-center rounded-full bg-[#34365a]">
        <span className="grid h-2.5 w-2.5 place-items-center rounded-full border border-[#eceef6]"><i className="h-1 w-1 rounded-full bg-[#eceef6]" /></span>
      </button>
      <div className="flex gap-[15px]">
        {APPS.map(([name, art, open]) => (
          <button key={name} aria-label={name} className="relative">
            <svg viewBox="0 0 24 24" className="h-[22px] w-[22px]">{art}</svg>
            {open && <span className="absolute -bottom-1 left-[9px] h-0.5 w-1 rounded bg-[#e6e8f2]" />}
          </button>
        ))}
      </div>
      <div className="flex items-center justify-end gap-1 pr-1">
        <button aria-label="Phone" className="grid h-6 w-7 place-items-center"><Smartphone size={13} /></button>
        <div className="flex h-[22px] items-center gap-1.5 rounded-full bg-[#2c2e52] px-2 font-['Roboto',sans-serif] text-[11px]">
          <svg viewBox="0 0 12 10" className="mr-2 h-2.5 w-3" fill="none" stroke="currentColor" aria-hidden="true"><rect x=".5" y=".5" width="11" height="9" rx="1" /><path d="M3 5h6M6 3v4" /></svg>
          <i className="h-1 w-1 rounded-full bg-white/80" />
          <svg viewBox="0 0 12 10" className="h-2.5 w-3" fill="currentColor" aria-hidden="true"><path d="M0 2.500q6-5 12 0L6 10z" /></svg>
          <svg viewBox="0 0 6 10" className="h-2.5 w-1.5" fill="currentColor" aria-hidden="true"><path d="M2 0h2v1h2v9H0V1h2z" /></svg>
          <span>8:48</span>
        </div>
      </div>
    </footer>
  )
}

// ── App ──────────────────────────────────────────────────────────────────────

export default function App() {
  return (
    <div className="relative flex h-screen flex-col overflow-hidden bg-[#2c363b] font-['Roboto_Condensed','Liberation_Sans_Narrow','Noto_Sans',sans-serif]">
      <div className="flex h-[22px] shrink-0 items-center justify-end gap-3 bg-[#f1f1f2] pr-1 text-[#3b3d40]">
        <button aria-label="Minimize"><Minus size={10} strokeWidth={3} /></button>
        <button aria-label="Maximize"><Square size={9} strokeWidth={3} /></button>
        <button aria-label="Close"><X size={10} strokeWidth={3} /></button>
      </div>
      <div className="flex h-[54px] shrink-0 border-b border-[#333e43] bg-[#566063]">
        <MenuPanel />
        <div className="ml-0.5 min-w-0 flex-1 border-l border-[#434e53]">
          <TransportRow />
          <PatternRow />
        </div>
      </div>
      <main className="flex min-h-0 flex-1">
        <Browser />
        <ChannelRack />
        <Playlist />
      </main>
      <Shelf />

      {/* Edge handle */}
      <button aria-label="Open side panel" className="absolute top-1/2 right-0 h-[34px] w-[13px] -translate-y-1/2 rounded-l-full bg-[#a7b0b6] text-[#4a5459]">
        <ChevronLeft size={14} />
      </button>
      <svg viewBox="0 0 10 14" className="pointer-events-none absolute top-8 left-[183px] h-3 w-2" aria-hidden="true">
        <path d="M0 0v11l3-2.500L5 13l2-1-2-4h4z" fill="#fff" stroke="#555" strokeWidth=".5" />
      </svg>
    </div>
  )
}
